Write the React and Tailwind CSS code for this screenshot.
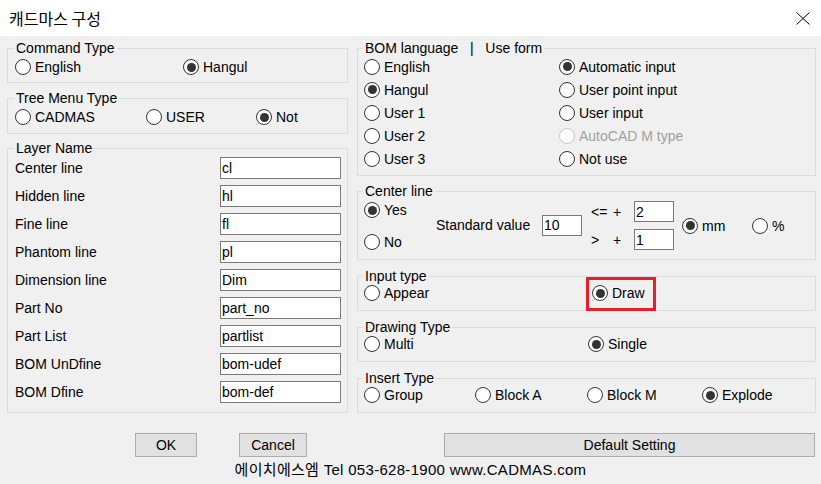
import React from 'react';

function Radio({ checked, disabled, label }) {
  return (
    <div className="flex items-center">
      <span
        className={`w-[16px] h-[16px] rounded-full border bg-white flex items-center justify-center shrink-0 ${
          disabled ? 'border-[#c8c8c8]' : 'border-[#333333]'
        }`}
      >
        {checked && <span className="w-[9px] h-[9px] rounded-full bg-[#333333]" />}
      </span>
      <span className={`ml-[4px] whitespace-nowrap ${disabled ? 'text-[#a0a0a0]' : ''}`}>{label}</span>
    </div>
  );
}

function Group({ title, className = '', children }) {
  return (
    <fieldset className={`border border-[#dcdcdc] ${className}`}>
      <legend className="px-[2px] -ml-[1px] leading-[16px]">{title}</legend>
      {children}
    </fieldset>
  );
}

function TextBox({ value, className = '' }) {
  return (
    <div className={`bg-white border border-[#7a7a7a] flex items-center pl-[1px] ${className}`}>
      {value}
    </div>
  );
}

const layers = [
  ['Center line', 'cl'],
  ['Hidden line', 'hl'],
  ['Fine line', 'fl'],
  ['Phantom line', 'pl'],
  ['Dimension line', 'Dim'],
  ['Part No', 'part_no'],
  ['Part List', 'partlist'],
  ['BOM UnDfine', 'bom-udef'],
  ['BOM Dfine', 'bom-def'],
];

export default function App() {
  return (
    <div className="w-[821px] h-[484px] bg-[#f0f0f0] text-[14px] leading-[16px] text-black overflow-hidden font-['Liberation_Sans','Noto_Sans_CJK_KR',sans-serif]">
      {/* title bar */}
      <div className="h-[36px] bg-white flex items-center justify-between pl-[9px] pr-[11px]">
        <span className="text-[16px] font-['Noto_Sans_CJK_KR',sans-serif]">캐드마스 구성</span>
        <svg width="14" height="13" viewBox="0 0 14 13" className="mt-[1px]">
          <path d="M0.5 0.5 L13.5 12.5 M13.5 0.5 L0.5 12.5" stroke="#000" strokeWidth="1" fill="none" />
        </svg>
      </div>

      <div className="flex pt-[4px] pl-[7px] gap-[9px]">
        {/* left column */}
        <div className="w-[341px] flex flex-col">
          <Group title="Command Type" className="pl-[7px] pb-[4px]">
            <div className="h-[22px] flex items-center">
              <div className="w-[168px]"><Radio label="English" /></div>
              <Radio checked label="Hangul" />
            </div>
          </Group>

          <Group title="Tree Menu Type" className="pl-[7px] pb-[5px] mt-[7px]">
            <div className="h-[22px] flex items-center">
              <div className="w-[131px]"><Radio label="CADMAS" /></div>
              <div className="w-[110px]"><Radio label="USER" /></div>
              <Radio checked label="Not" />
            </div>
          </Group>

          <Group title="Layer Name" className="pl-[7px] pb-[6px] mt-[6px]">
            <div className="-mt-[2px] flex flex-col">
              {layers.map(([name, val]) => (
                <div key={name} className="h-[28px] flex items-center">
                  <span className="w-[205px]">{name}</span>
                  <TextBox value={val} className="w-[121px] h-[22px]" />
                </div>
              ))}
            </div>
          </Group>
        </div>

        {/* right column */}
        <div className="w-[459px] flex flex-col">
          <Group title={'BOM language\u00a0\u00a0 |\u00a0\u00a0 Use form'} className="pl-[6px] pb-[5px]">
            <div className="-mt-[1px] flex">
              <div className="w-[195px] flex flex-col">
                <div className="h-[23px] flex items-center"><Radio label="English" /></div>
                <div className="h-[23px] flex items-center"><Radio checked label="Hangul" /></div>
                <div className="h-[23px] flex items-center"><Radio label="User 1" /></div>
                <div className="h-[23px] flex items-center"><Radio label="User 2" /></div>
                <div className="h-[23px] flex items-center"><Radio label="User 3" /></div>
              </div>
              <div className="flex flex-col">
                <div className="h-[23px] flex items-center"><Radio checked label="Automatic input" /></div>
                <div className="h-[23px] flex items-center"><Radio label="User point input" /></div>
                <div className="h-[23px] flex items-center"><Radio label="User input" /></div>
                <div className="h-[23px] flex items-center"><Radio disabled label="AutoCAD M type" /></div>
                <div className="h-[23px] flex items-center"><Radio label="Not use" /></div>
              </div>
            </div>
          </Group>

          <Group title="Center line" className="pl-[6px] pb-[4px] mt-[7px]">
            <div className="h-[56px] flex">
              <div className="w-[72px] flex flex-col justify-between pb-[2px]">
                <div className="h-[22px] flex items-center"><Radio checked label="Yes" /></div>
                <div className="h-[22px] flex items-center"><Radio label="No" /></div>
              </div>
              <div className="flex items-center pb-[4px]">
                <span className="w-[106px]">Standard value</span>
                <TextBox value="10" className="w-[40px] h-[21px]" />
              </div>
              <div className="ml-[9px] pt-[2px] flex flex-col gap-[7px]">
                <div className="h-[21px] flex items-center">
                  <span className="w-[22px]">&lt;=</span>
                  <span className="w-[21px]">+</span>
                  <TextBox value="2" className="w-[40px] h-[21px]" />
                </div>
                <div className="h-[21px] flex items-center">
                  <span className="w-[22px]">&gt;</span>
                  <span className="w-[21px]">+</span>
                  <TextBox value="1" className="w-[40px] h-[21px]" />
                </div>
              </div>
              <div className="ml-[8px] flex items-center pb-[3px]">
                <div className="w-[70px]"><Radio checked label="mm" /></div>
                <Radio label="%" />
              </div>
            </div>
          </Group>

          <Group title="Input type" className="pl-[6px] pb-[6px] mt-[8px]">
            <div className="-mt-[2px] h-[22px] flex items-center">
              <div className="w-[228px]"><Radio label="Appear" /></div>
              <div className="relative">
                <Radio checked label="Draw" />
                <div className="absolute -left-[6px] -top-[8px] w-[70px] h-[34px] border-[3px] border-[#e3202b]" />
              </div>
            </div>
          </Group>

          <Group title="Drawing Type" className="pl-[6px] pb-[6px] mt-[8px]">
            <div className="-mt-[2px] h-[22px] flex items-center">
              <div className="w-[224px]"><Radio label="Multi" /></div>
              <Radio checked label="Single" />
            </div>
          </Group>

          <Group title="Insert Type" className="pl-[6px] pb-[6px] mt-[8px]">
            <div className="-mt-[2px] h-[22px] flex items-center">
              <div className="w-[111px]"><Radio label="Group" /></div>
              <div className="w-[112px]"><Radio label="Block A" /></div>
              <div className="w-[115px]"><Radio label="Block M" /></div>
              <Radio checked label="Explode" />
            </div>
          </Group>
        </div>
      </div>

      {/* buttons */}
      <div className="flex mt-[20px] h-[24px]">
        <button className="ml-[135px] w-[62px] h-[24px] bg-[#e1e1e1] border border-[#adadad]">OK</button>
        <button className="ml-[42px] w-[68px] h-[24px] bg-[#e1e1e1] border border-[#adadad]">Cancel</button>
        <button className="ml-[137px] w-[371px] h-[24px] bg-[#e1e1e1] border border-[#adadad]">Default Setting</button>
      </div>
      <div className="mt-[5px] text-center text-[15px] tracking-[0.3px] leading-[16px]">에이치에스엠 Tel 053-628-1900 www.CADMAS.com</div>
    </div>
  );
}
